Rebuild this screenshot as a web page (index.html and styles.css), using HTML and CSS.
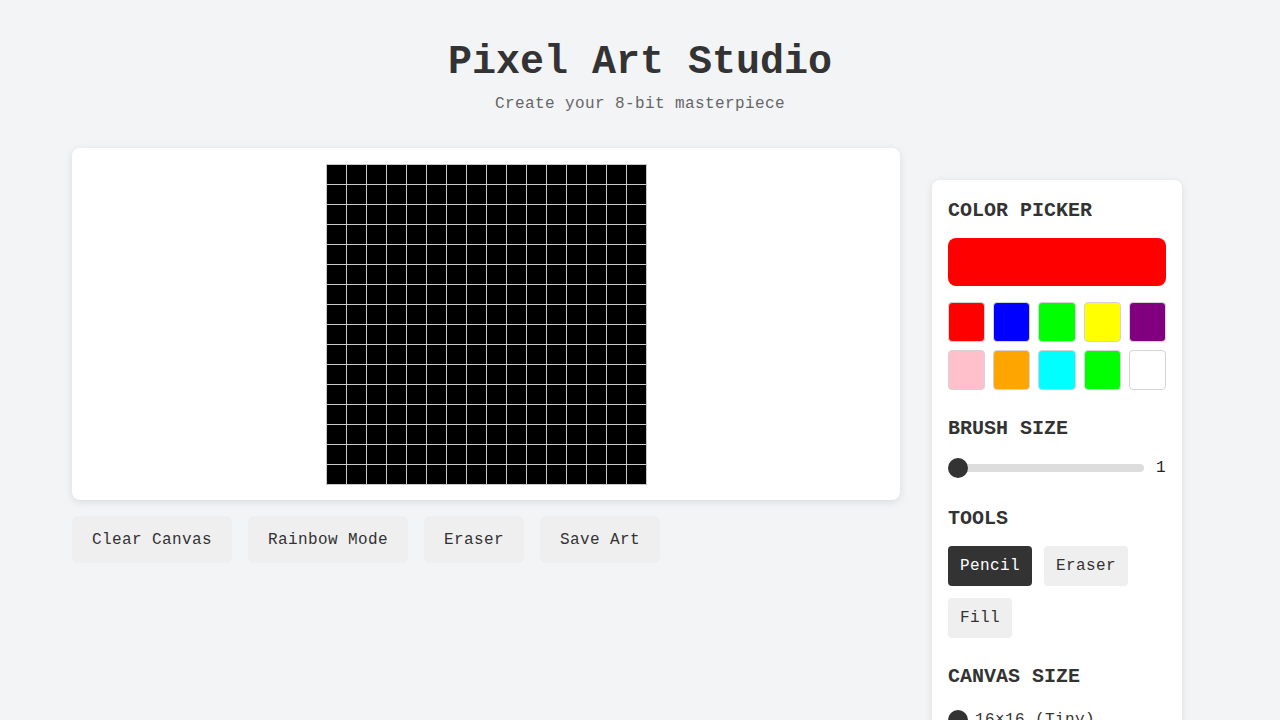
FILE: index.html
```html
<!DOCTYPE html>
<html lang="en">
<head>
<meta charset="utf-8">
<title>Pixel Art Studio</title>
<link rel="stylesheet" href="styles.css">
</head>
<body>
<header class="header">
  <h1 class="title">Pixel Art Studio</h1>
  <p class="subtitle">Create your 8-bit masterpiece</p>
</header>
<div class="layout">
  <main class="main">
    <div class="canvas-card">
      <div class="pixel-grid" id="grid"></div>
    </div>
    <div class="actions">
      <button class="action-btn">Clear Canvas</button>
      <button class="action-btn">Rainbow Mode</button>
      <button class="action-btn">Eraser</button>
      <button class="action-btn">Save Art</button>
    </div>
  </main>
  <aside class="sidebar">
    <section class="section">
      <h2 class="section-title">COLOR PICKER</h2>
      <div class="preview"></div>
      <div class="swatches">
        <div class="swatch sw-red"></div>
        <div class="swatch sw-blue"></div>
        <div class="swatch sw-lime"></div>
        <div class="swatch sw-yellow"></div>
        <div class="swatch sw-purple"></div>
        <div class="swatch sw-pink"></div>
        <div class="swatch sw-orange"></div>
        <div class="swatch sw-cyan"></div>
        <div class="swatch sw-lime"></div>
        <div class="swatch sw-white"></div>
      </div>
    </section>
    <section class="section">
      <h2 class="section-title">BRUSH SIZE</h2>
      <div class="slider-row">
        <div class="slider-track"><span class="slider-thumb"></span></div>
        <span class="slider-value">1</span>
      </div>
    </section>
    <section class="section">
      <h2 class="section-title">TOOLS</h2>
      <div class="tools">
        <button class="tool-btn active">Pencil</button>
        <button class="tool-btn">Eraser</button>
        <button class="tool-btn">Fill</button>
      </div>
    </section>
    <section class="section">
      <h2 class="section-title">CANVAS SIZE</h2>
      <div class="radio-list">
        <label class="radio-row"><span class="radio checked"></span>16×16 (Tiny)</label>
        <label class="radio-row"><span class="radio"></span>32×32 (Small)</label>
        <label class="radio-row"><span class="radio"></span>64×64 (Large)</label>
      </div>
    </section>
  </aside>
</div>
<script>
  var g = document.getElementById('grid');
  for (var i = 0; i < 256; i++) {
    var c = document.createElement('div');
    c.className = 'cell';
    g.appendChild(c);
  }
</script>
</body>
</html>
```
FILE: styles.css
```css
* { box-sizing: border-box; }

html, body { height: 100%; }

body {
  margin: 0;
  background: #f3f4f6;
  font-family: "Liberation Mono", "Courier New", monospace;
  color: #333;
  overflow: hidden;
}

.header {
  text-align: center;
  padding-top: 40px;
}

.title {
  margin: 0;
  font-size: 40px;
  line-height: 46px;
  font-weight: 700;
  color: #333;
}

.subtitle {
  margin: 9px 0 0;
  font-size: 16px;
  line-height: 18px;
  letter-spacing: 0.4px;
  color: #666;
}

.layout {
  display: flex;
  align-items: flex-start;
  gap: 32px;
  padding: 0 98px 0 72px;
  margin-top: 35px;
}

.main {
  flex: 1;
  min-width: 0;
}

.canvas-card {
  background: #fff;
  border-radius: 8px;
  box-shadow: 0 2px 8px rgba(0, 0, 0, 0.1);
  padding: 16px 0 15px;
  display: flex;
  justify-content: center;
}

.pixel-grid {
  display: grid;
  grid-template-columns: repeat(16, 19px);
  grid-auto-rows: 19px;
  gap: 1px;
  padding: 1px;
  background: #c8c8c8;
}

.cell {
  background: #000;
}

.actions {
  display: flex;
  gap: 16px;
  margin-top: 16px;
}

.action-btn {
  font-family: "Liberation Mono", "Courier New", monospace;
  font-size: 16px;
  letter-spacing: 0.4px;
  line-height: 19px;
  color: #333;
  background: #efefef;
  border: none;
  border-radius: 6px;
  padding: 15px 20px 13px;
}

.sidebar {
  width: 250px;
  flex: none;
  margin-top: 32px;
  background: #fff;
  border-radius: 8px;
  box-shadow: 0 2px 8px rgba(0, 0, 0, 0.1);
  padding: 16px 16px 24px;
  display: flex;
  flex-direction: column;
  gap: 24px;
}

.section-title {
  margin: 0 0 13px;
  padding-top: 1px;
  font-size: 20px;
  line-height: 28px;
  font-weight: 700;
  color: #333;
}

.preview {
  height: 48px;
  border-radius: 8px;
  background: #ff0000;
  margin-bottom: 16px;
}

.swatches {
  display: grid;
  grid-template-columns: repeat(5, 1fr);
  gap: 8px;
}

.swatch {
  height: 40px;
  border-radius: 4px;
  border: 1px solid #d4d4d4;
}

.sw-red { background: #ff0000; }
.sw-blue { background: #0000ff; }
.sw-lime { background: #00ff00; }
.sw-yellow { background: #ffff00; }
.sw-purple { background: #800080; }
.sw-pink { background: #ffc0cb; }
.sw-orange { background: #ffa500; }
.sw-cyan { background: #00ffff; }
.sw-white { background: #ffffff; }

.slider-row {
  display: flex;
  align-items: center;
  gap: 12px;
  height: 24px;
}

.slider-track {
  flex: 1;
  height: 8px;
  border-radius: 4px;
  background: #dddddd;
  position: relative;
}

.slider-thumb {
  position: absolute;
  left: 0;
  top: -6px;
  width: 20px;
  height: 20px;
  border-radius: 50%;
  background: #333;
}

.slider-value {
  font-size: 16px;
  line-height: 20px;
  color: #222;
  width: 10px;
}

.tools {
  display: flex;
  flex-wrap: wrap;
  gap: 12px;
}

.tool-btn {
  font-family: "Liberation Mono", "Courier New", monospace;
  font-size: 16px;
  letter-spacing: 0.4px;
  line-height: 20px;
  color: #333;
  background: #efefef;
  border: none;
  border-radius: 4px;
  padding: 10px 12px;
}

.tool-btn.active {
  background: #333;
  color: #fff;
}

.radio-list {
  display: flex;
  flex-direction: column;
  gap: 10px;
  padding-top: 4px;
}

.radio-row {
  display: flex;
  align-items: center;
  gap: 7px;
  font-size: 16px;
  letter-spacing: 0.4px;
  line-height: 24px;
  color: #333;
}

.radio {
  width: 20px;
  height: 20px;
  border-radius: 50%;
  border: 2px solid #333;
  background: #fff;
  flex: none;
}

.radio.checked {
  background: #333;
}
```
